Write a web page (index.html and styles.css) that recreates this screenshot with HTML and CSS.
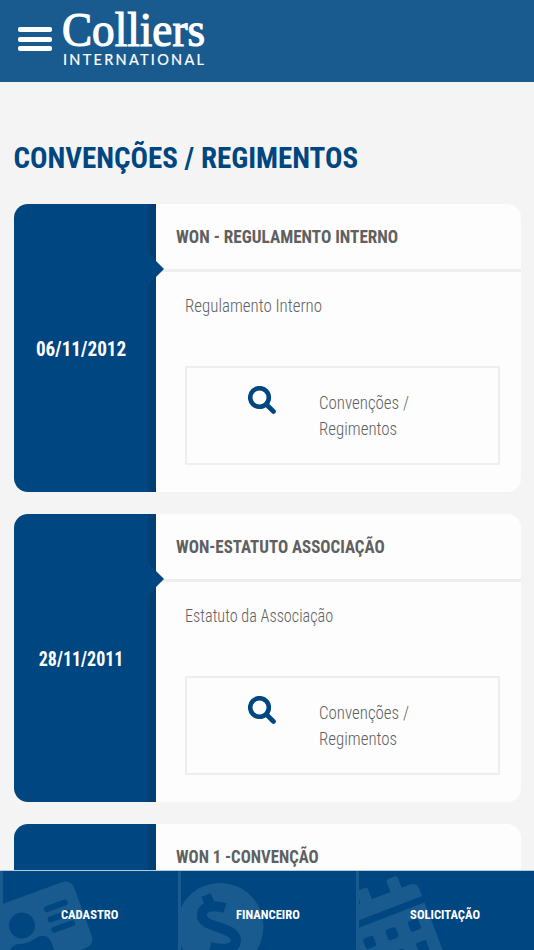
FILE: index.html
```html
<!DOCTYPE html>
<html lang="pt-br">
<head>
    <meta charset="UTF-8">
    <meta name="viewport" content="width=device-width, initial-scale=1.0">
    <title>Convenções / Regimentos</title>
    <link rel="stylesheet" href="styles.css">
</head>
<body>
    <header class="topo">
        <div class="menu"><i></i><i></i><i></i></div>
        <svg class="logo" width="150" height="76" viewBox="0 0 150 76">
            <text class="logo-nome" x="0" y="46" textLength="143" lengthAdjust="spacingAndGlyphs">Colliers</text>
            <text class="logo-sub" x="1" y="65" textLength="141">INTERNATIONAL</text>
        </svg>
    </header>

    <main>
        <h1><span>CONVENÇÕES / REGIMENTOS</span></h1>

        <div class="card">
            <div class="data"><span>06/11/2012</span></div>
            <div class="info">
                <h2><span class="t1">WON - REGULAMENTO INTERNO</span></h2>
                <p><span class="d1">Regulamento Interno</span></p>
                <div class="anexo">
                    <svg class="lupa" viewBox="0 0 28 28"><circle cx="11.5" cy="11.5" r="9.3"/><path d="M18.5 18.5L25.5 25.500"/></svg>
                    <div class="link"><span>Convenções /<br>Regimentos</span></div>
                </div>
            </div>
        </div>

        <div class="card">
            <div class="data"><span class="data2">28/11/2011</span></div>
            <div class="info">
                <h2><span class="t2">WON-ESTATUTO ASSOCIAÇÃO</span></h2>
                <p><span class="d2">Estatuto da Associação</span></p>
                <div class="anexo">
                    <svg class="lupa" viewBox="0 0 28 28"><circle cx="11.5" cy="11.5" r="9.3"/><path d="M18.5 18.5L25.5 25.500"/></svg>
                    <div class="link"><span>Convenções /<br>Regimentos</span></div>
                </div>
            </div>
        </div>

        <div class="card">
            <div class="data"></div>
            <div class="info">
                <h2><span class="t3">WON 1 -CONVENÇÃO</span></h2>
            </div>
        </div>
    </main>

    <nav class="rodape">
        <a class="item">
            <svg class="fundo" viewBox="0 0 178 79">
                <g transform="translate(71 8) rotate(-20)">
                    <rect class="claro" x="-110" y="0" width="110" height="70" rx="9"/>
                    <circle class="escuro" cx="-62" cy="27" r="13"/>
                    <path class="escuro" d="M-84 61v-7q0-11 11-11q11 4 22 0q11 0 11 11v7z"/>
                    <path class="linha" d="M-33 20h19M-33 31h19M-33 42h19"/>
                </g>
            </svg>
            <span>CADASTRO</span>
        </a>
        <a class="item">
            <svg class="fundo" viewBox="178 0 178 79">
                <circle class="claro" cx="220" cy="55.5" r="43.5"/>
                <path class="cifrao" d="M206 24l5 12M225 37C216 34 203 34 202 43C200 58 235 54 236 69C236 79 222 79 210 76"/>
            </svg>
            <span>FINANCEIRO</span>
        </a>
        <a class="item">
            <svg class="fundo" viewBox="356 0 178 79">
                <g transform="translate(422 25) rotate(-21)">
                    <path class="claro" d="M-80 0v-15h20v-10q0-3 3-3h6q3 0 3 3v10h20v-10q0-3 3-3h6q3 0 3 3v10h8q8 0 8 8v7z"/>
                    <path class="claro" d="M-80 7H0v70h-80z"/>
                    <g class="escuro">
                        <rect x="-71" y="19" width="11" height="11" rx="2"/>
                        <rect x="-47" y="19" width="11" height="11" rx="2"/>
                        <rect x="-23" y="19" width="11" height="11" rx="2"/>
                        <rect x="-47" y="42" width="11" height="11" rx="2"/>
                        <rect x="-23" y="42" width="11" height="11" rx="2"/>
                    </g>
                </g>
            </svg>
            <span>SOLICITAÇÃO</span>
        </a>
    </nav>
</body>
</html>
```
FILE: styles.css
```css
*{
    box-sizing: border-box;
}
body{
    margin: 0;
    height: 950px;
    overflow: hidden;
    display: flex;
    flex-direction: column;
    background-color: #f4f4f4;
    font-family: Roboto, "Liberation Sans", sans-serif;
    font-stretch: 75%;
    color: #606060;
}
h1,h2,p{
    margin: 0;
}
span{
    display: inline-block;
    white-space: nowrap;
    transform-origin: left center;
}

.topo{
    flex: none;
    height: 82px;
    padding-left: 18px;
    display: flex;
    background-color: #1a5b8f;
}
.menu{
    width: 34px;
    margin: 27px 10px 0 0;
    display: flex;
    flex-direction: column;
    gap: 4.5px;
}
.menu i{
    height: 5px;
    border-radius: 2px;
    background-color: #fff;
}
.logo{
    fill: #fff;
    overflow: visible;
}
.logo-nome{
    font: 48px "Liberation Serif", serif;
    stroke: #fff;
    stroke-width: 1.2px;
}
.logo-sub{
    font: 14.5px Lato, sans-serif;
    stroke: #fff;
    stroke-width: .2px;
}

main{
    flex: 1;
    overflow: hidden;
    padding: 58px 13.5px 0;
}
h1{
    height: 64px;
    line-height: 37px;
    font-size: 29px;
    color: #004680;
}
.card{
    height: 288px;
    margin-bottom: 22px;
    display: flex;
    overflow: hidden;
    border-radius: 14px;
    background-color: #fdfdfd;
}
.data{
    position: relative;
    flex: none;
    width: 142.5px;
    padding-top: 2px;
    display: flex;
    align-items: center;
    justify-content: center;
    border-right: 8px solid #003f75;
    background-color: #004680;
    color: #fff;
    font-size: 20px;
    font-weight: bold;
}
.data span{
    transform-origin: center;
    transform: scaleX(.96);
}
.data .data2{
    transform: scaleX(.9);
}
/* arrow pointing at the divider */
.data::after{
    content: "";
    position: absolute;
    top: 49px;
    right: -16px;
    border: 16px solid transparent;
    border-left-color: #004680;
    border-right: 0;
}
.info{
    flex: 1;
}
h2{
    height: 68px;
    padding-left: 20px;
    line-height: 66px;
    border-bottom: 3px solid #eee;
    font-size: 18px;
}
.t1{
    transform: scaleX(.953);
}
.t2{
    transform: scaleX(.94);
}
.t3{
    transform: scaleX(.93);
}
p{
    height: 94px;
    padding: 21px 0 0 29px;
    line-height: 26px;
    font-size: 18.5px;
    font-weight: 300;
}
.d1,.link span{
    transform: scaleX(.913);
}
.d2{
    transform: scaleX(.876);
}
.anexo{
    height: 99px;
    margin: 0 20.5px 0 28.5px;
    padding: 18px 0 0 61px;
    display: flex;
    border: 2px solid #eee;
}
.lupa{
    width: 28px;
    height: 28px;
    fill: none;
    stroke: #004680;
    stroke-width: 4.6px;
    stroke-linecap: round;
}
.link{
    margin: 4px 0 0 43px;
    line-height: 26px;
    font-size: 18.5px;
    font-weight: 300;
}

.rodape{
    flex: none;
    height: 80px;
    display: grid;
    grid-template-columns: 178px 178px 178px;
    border-top: 1px solid #b5cadb;
    background-color: #004680;
}
.item{
    position: relative;
    display: flex;
    align-items: center;
    justify-content: center;
    padding: 7px 2px 0 0;
    overflow: hidden;
    border-left: 3px solid #1a5b8f;
    color: #fff;
    font-size: 13px;
    font-weight: bold;
}
.item span{
    position: relative;
    transform-origin: center;
    transform: scaleX(.97);
}
.fundo{
    position: absolute;
    top: 0;
    left: -3px;
    width: 178px;
    height: 79px;
}
.claro{
    fill: #1a5b8f;
}
.escuro{
    fill: #004680;
}
.linha,.cifrao{
    fill: none;
    stroke: #004680;
    stroke-width: 6px;
    stroke-linecap: round;
}
.cifrao{
    stroke-width: 10px;
    stroke-linecap: butt;
}
```
